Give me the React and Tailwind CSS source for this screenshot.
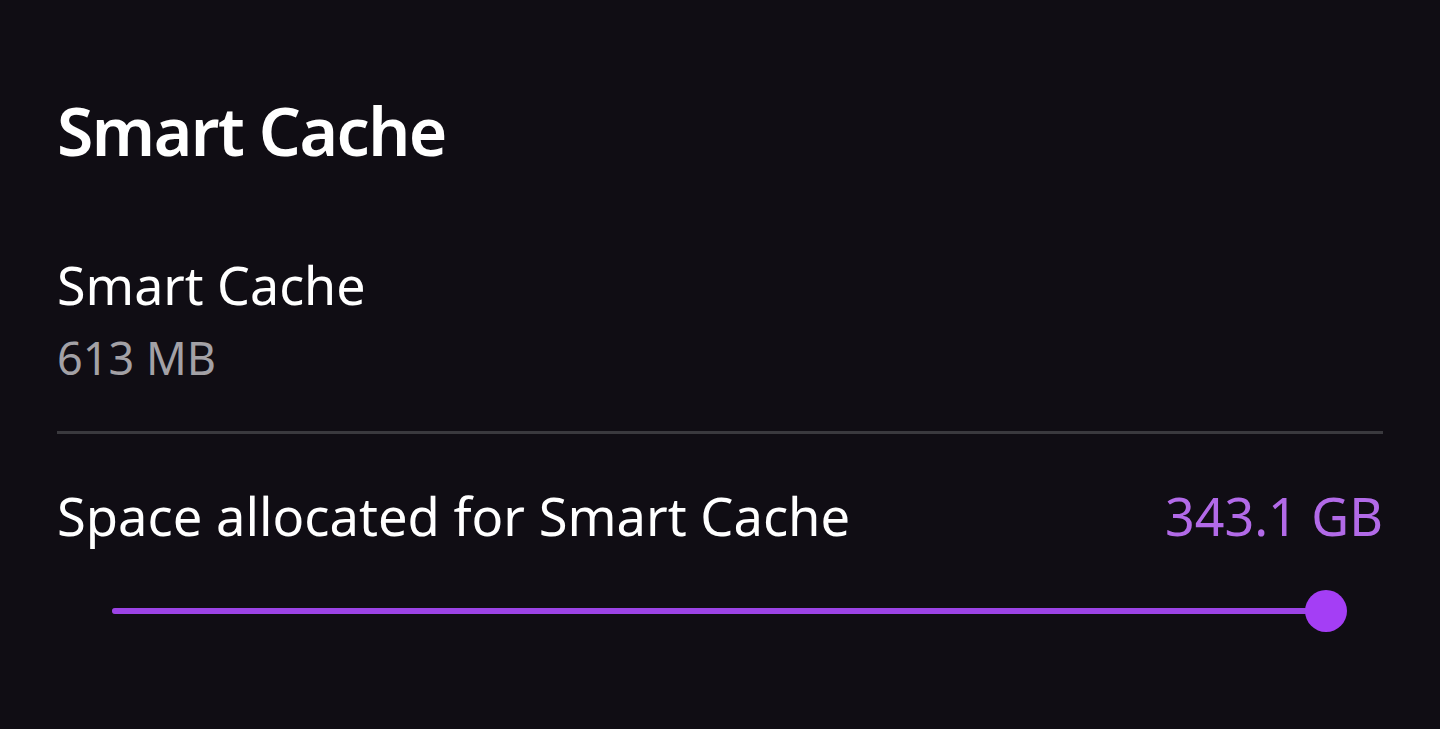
import React from "react";

const SmartCache = () => {
  const used = 100;

  return (
    <div
      className="w-full h-[729px] bg-[#100d14] px-[57px] pt-[85px] text-white overflow-hidden"
      style={{ fontFamily: '"Noto Sans", "Open Sans", sans-serif' }}
    >
      {/* Title */}
      <h1 className="text-[66px] leading-[90px] font-semibold tracking-[-1.5px]">Smart Cache</h1>

      {/* Cache size */}
      <div className="mt-[75px]">
        <div className="text-[52px] leading-[70px]">Smart Cache</div>
        <div className="mt-[9px] text-[45px] leading-[58px] text-[#a3a1a6]">613 MB</div>
      </div>

      <div className="mt-[44px] h-[3px] bg-[#3a393e]" />

      {/* Allocated space */}
      <div className="mt-[47px] flex items-center justify-between">
        <span className="text-[52.5px] leading-[70px]">Space allocated for Smart Cache</span>
        <span className="text-[52px] leading-[70px] text-[#b26ae8]">343.1 GB</span>
      </div>

      {/* Slider */}
      <div className="mt-[39px] pl-[55px] pr-[57px]">
        <div className="relative h-[42px] flex items-center">
          <div className="w-full h-[6px] rounded-full bg-[#3a393e]">
            <div className="h-full rounded-full bg-[#9c43e6]" style={{ width: `${used}%` }} />
          </div>
          <div className="absolute right-[-21px] w-[42px] h-[42px] rounded-full bg-[#a43ef5]" />
        </div>
      </div>
    </div>
  );
};

export default function App() {
  return <SmartCache />;
}
